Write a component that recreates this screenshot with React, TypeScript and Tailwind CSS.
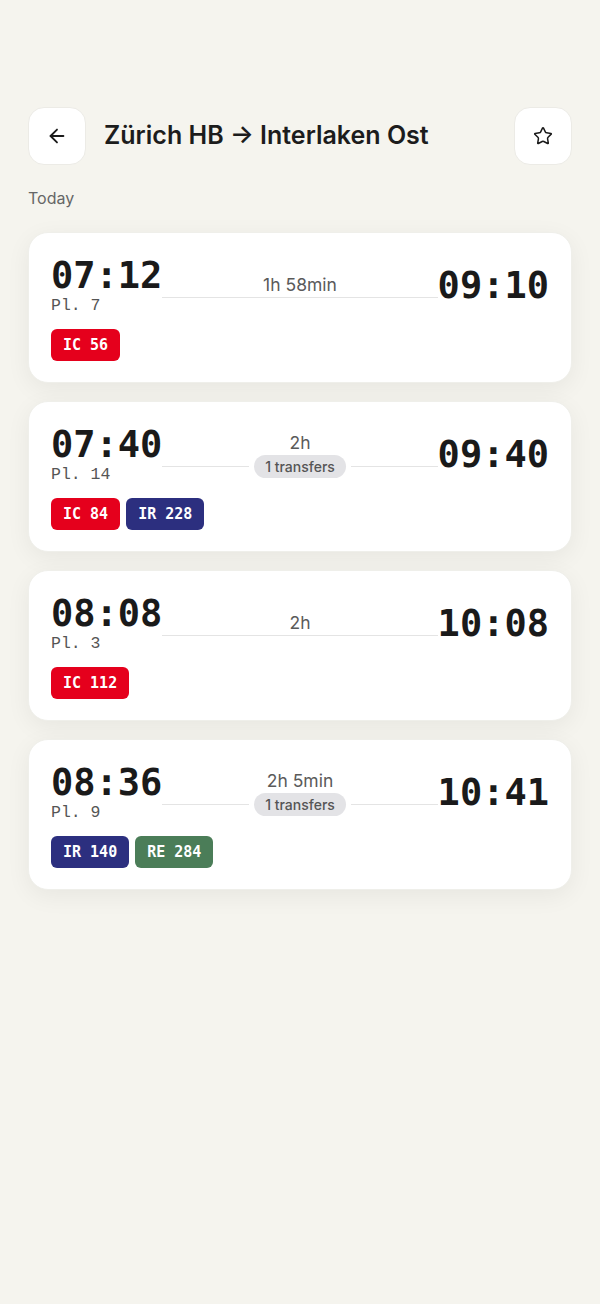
import React from "react";
import { ArrowLeft, Star } from "lucide-react";

type Badge = { label: string; color: "red" | "navy" | "green" };
type Trip = {
  dep: string;
  arr: string;
  pl: string;
  dur: string;
  transfers?: number;
  badges: Badge[];
};

const trips: Trip[] = [
  { dep: "07:12", arr: "09:10", pl: "Pl. 7", dur: "1h 58min", badges: [{ label: "IC 56", color: "red" }] },
  {
    dep: "07:40",
    arr: "09:40",
    pl: "Pl. 14",
    dur: "2h",
    transfers: 1,
    badges: [
      { label: "IC 84", color: "red" },
      { label: "IR 228", color: "navy" },
    ],
  },
  { dep: "08:08", arr: "10:08", pl: "Pl. 3", dur: "2h", badges: [{ label: "IC 112", color: "red" }] },
  {
    dep: "08:36",
    arr: "10:41",
    pl: "Pl. 9",
    dur: "2h 5min",
    transfers: 1,
    badges: [
      { label: "IR 140", color: "navy" },
      { label: "RE 284", color: "green" },
    ],
  },
];

const badgeClass: Record<Badge["color"], string> = {
  red: "bg-[#e5001c]",
  navy: "bg-[#2c2f7f]",
  green: "bg-[#4b7d58]",
};

const mono = { fontFamily: '"DejaVu Sans Mono", "Liberation Mono", monospace' };
const sans = { fontFamily: 'Inter, "Noto Sans", sans-serif' };

function TripCard({ t }: { t: Trip }) {
  return (
    <div className="bg-white rounded-[20px] px-[22px] pt-[23px] pb-[21px] shadow-[0_6px_24px_rgba(0,0,0,0.06)] border border-[#efefea]">
      <div className="flex items-center">
        <div className="flex flex-col" style={mono}>
          <div className="text-[37px] leading-[40px] font-bold text-[#1a1a1a]">{t.dep}</div>
          <div className="text-[16.5px] leading-[20px] text-[#555]" style={{ fontFamily: '"Liberation Mono", monospace' }}>
            {t.pl}
          </div>
        </div>
        <div className="flex-1 flex flex-col items-center" style={sans}>
          <div className="text-[17.5px] leading-5 text-[#5a5a5a]">{t.dur}</div>
          <div className="w-full flex items-center mt-[2px]">
            <div className="flex-1 h-px bg-[#e4e4e4]" />
            {t.transfers ? (
              <div className="mx-[5px] h-[23px] px-[11px] rounded-full bg-[#e3e3e6] text-[14px] leading-[23px] font-medium text-[#555]">
                {t.transfers} transfers
              </div>
            ) : null}
            <div className="flex-1 h-px bg-[#e4e4e4]" />
          </div>
        </div>
        <div className="text-[37px] leading-[40px] font-bold text-[#1a1a1a]" style={mono}>
          {t.arr}
        </div>
      </div>
      <div className="flex gap-[6px] mt-[13px]">
        {t.badges.map((b) => (
          <div
            key={b.label}
            className={`${badgeClass[b.color]} h-8 px-3 rounded-[6px] flex items-center text-white text-[15px] font-bold`}
            style={mono}
          >
            {b.label}
          </div>
        ))}
      </div>
    </div>
  );
}

export default function App() {
  return (
    <div className="min-h-screen bg-[#f5f4ee] px-7 pt-[107px] pb-10" style={sans}>
      <div className="flex items-center">
        <button className="w-[58px] h-[58px] rounded-2xl bg-white border border-[#ecebe6] flex items-center justify-center text-[#1a1a1a]">
          <ArrowLeft size={22} strokeWidth={2} />
        </button>
        <h1 className="ml-[18px] flex-1 text-[25px] font-semibold text-[#1c1c1c]">
          Zürich HB → Interlaken Ost
        </h1>
        <button className="w-[58px] h-[58px] rounded-2xl bg-white border border-[#ecebe6] flex items-center justify-center text-[#1a1a1a]">
          <Star size={20} strokeWidth={1.8} />
        </button>
      </div>
      <div className="mt-[23px] text-[16px] leading-5 text-[#666]">Today</div>
      <div className="mt-[24px] flex flex-col gap-[18px]">
        {trips.map((t) => (
          <TripCard key={t.dep} t={t} />
        ))}
      </div>
    </div>
  );
}
